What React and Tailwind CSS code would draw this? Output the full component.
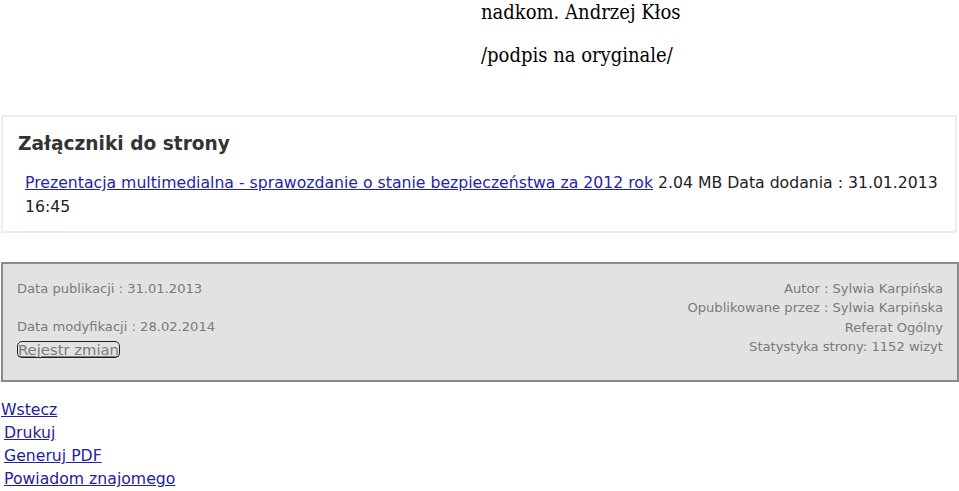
const SANS = { fontFamily: '"DejaVu Sans", Verdana, sans-serif' }

const LINKS = ['Wstecz', 'Drukuj', 'Generuj PDF', 'Powiadom znajomego']

export default function App() {
  return (
    <div className="w-[959px] h-[491px] overflow-hidden bg-white" style={SANS}>
      <div className="pl-[481px] pt-[1px] text-[20px] leading-[22px] text-black font-['DejaVu_Serif_Condensed','Liberation_Serif',serif]">
        <p>nadkom. Andrzej Kłos</p>
        <p className="mt-[21px]">/podpis na oryginale/</p>
      </div>

      <section className="mt-[49px] ml-[1px] w-[956px] h-[118px] border-2 border-[#ececec] pl-[15px] pt-[14px]">
        <h2 className="text-[18.6px] leading-[26px] font-bold text-[#333]">Załączniki do strony</h2>
        <p className="mt-[14px] pl-[7px] pr-[8px] text-[15.7px] leading-[24px] text-[#222]">
          <a href="#" className="text-[#2424a8] underline">
            Prezentacja multimedialna - sprawozdanie o stanie bezpieczeństwa za 2012 rok
          </a>{' '}
          2.04 MB Data dodania : 31.01.2013 16:45
        </p>
      </section>

      <section className="mt-[29px] ml-[1px] w-[958px] h-[120px] border-2 border-[#8a8a8a] bg-[#e2e2e2] px-[14px] pt-[15px] flex justify-between text-[13.1px] leading-[19.3px] text-[#7a7a7a]">
        <div>
          <p>Data publikacji : 31.01.2013</p>
          <p className="mt-[19px]">Data modyfikacji : 28.02.2014</p>
          <a href="#" className="inline-block mt-[5px] ml-[1px] text-[14.8px] underline rounded-[4px] outline outline-[1.5px] outline-[#222] leading-[15px]">
            Rejestr zmian
          </a>
        </div>
        <div className="text-right">
          <p>Autor : Sylwia Karpińska</p>
          <p>Opublikowane przez : Sylwia Karpińska</p>
          <p>Referat Ogólny</p>
          <p>Statystyka strony: 1152 wizyt</p>
        </div>
      </section>

      <nav className="mt-[16px] flex flex-col items-start text-[15.7px] leading-[23px]">
        {LINKS.map((l, i) => (
          <a key={l} href="#" className={`text-[#22229f] underline ${i === 0 ? 'ml-[1px]' : 'ml-[4px]'}`}>
            {l}
          </a>
        ))}
      </nav>
    </div>
  )
}
